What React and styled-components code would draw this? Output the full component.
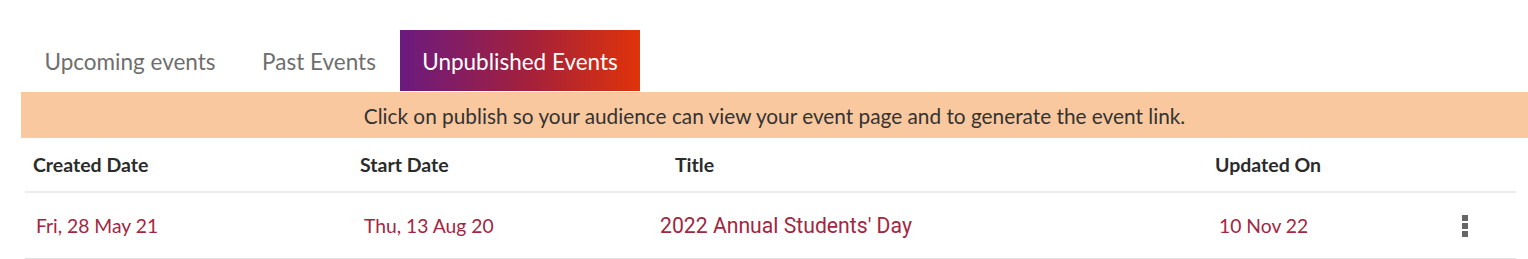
import React from "react";
import styled, { createGlobalStyle } from "styled-components";

const Global = createGlobalStyle`
  html, body { margin: 0; padding: 0; background: #fff; }
  body { font-family: Lato, "Open Sans", sans-serif; }
`;

const Page = styled.div`
  width: 1528px;
  height: 259px;
  padding-top: 30px;
  box-sizing: border-box;
  overflow: hidden;
`;

const Tabs = styled.div`
  display: flex;
  padding-left: 22px;
  height: 61px;
`;

const Tab = styled.div`
  display: flex;
  align-items: center;
  justify-content: center;
  padding-top: 2px;
  font-size: 22.5px;
  color: ${(p) => (p.$active ? "#ffffff" : "#6e6e6e")};
  background: ${(p) =>
    p.$active ? "linear-gradient(90deg, #6b1a80 0%, #a5213a 55%, #e0330a 100%)" : "transparent"};
  width: ${(p) => p.$w}px;
  box-sizing: border-box;
`;

const Banner = styled.div`
  margin-top: 1px;
  margin-left: 21px;
  height: 46px;
  background: #fac89e;
  display: flex;
  align-items: center;
  justify-content: center;
  font-size: 20.8px;
  color: #333;
`;

const Table = styled.div`
  margin: 0 12px 0 25px;
`;

const Row = styled.div`
  display: grid;
  grid-template-columns: 327px 300px 555px 230px 1fr;
  align-items: center;
  height: ${(p) => p.$h}px;
  border-bottom: 2px solid ${(p) => (p.$head ? "#ececec" : "#e0e0e0")};
`;

const HeadCell = styled.div`
  font-size: 19.5px;
  font-weight: 700;
  color: #2b2b2b;
  padding-left: ${(p) => p.$pl || 8}px;
`;

const Cell = styled.div`
  color: #a3263f;
  padding-left: ${(p) => p.$pl || 11}px;
  font-family: ${(p) => (p.$title ? "Roboto, Lato, sans-serif" : "inherit")};
  font-size: ${(p) => (p.$title ? "21.2px" : "19.3px")};
`;

const Kebab = styled.div`
  display: flex;
  flex-direction: column;
  gap: 2px;
  margin-left: 25px;
  span {
    width: 6px;
    height: 6px;
    background: #666;
    display: block;
  }
`;

export default function App() {
  return (
    <Page>
      <Global />
      <Tabs>
        <Tab $w={216}>Upcoming events</Tab>
        <Tab $w={162}>Past Events</Tab>
        <Tab $active $w={240}>Unpublished Events</Tab>
      </Tabs>
      <Banner>Click on publish so your audience can view your event page and to generate the event link.</Banner>
      <Table>
        <Row $head $h={53}>
          <HeadCell>Created Date</HeadCell>
          <HeadCell>Start Date</HeadCell>
          <HeadCell $pl={23}>Title</HeadCell>
          <HeadCell>Updated On</HeadCell>
          <div />
        </Row>
        <Row $h={65}>
          <Cell>Fri, 28 May 21</Cell>
          <Cell $pl={12}>Thu, 13 Aug 20</Cell>
          <Cell $title $pl={8}>2022 Annual Students' Day</Cell>
          <Cell $pl={12}>10 Nov 22</Cell>
          <Kebab>
            <span />
            <span />
            <span />
          </Kebab>
        </Row>
      </Table>
    </Page>
  );
}
